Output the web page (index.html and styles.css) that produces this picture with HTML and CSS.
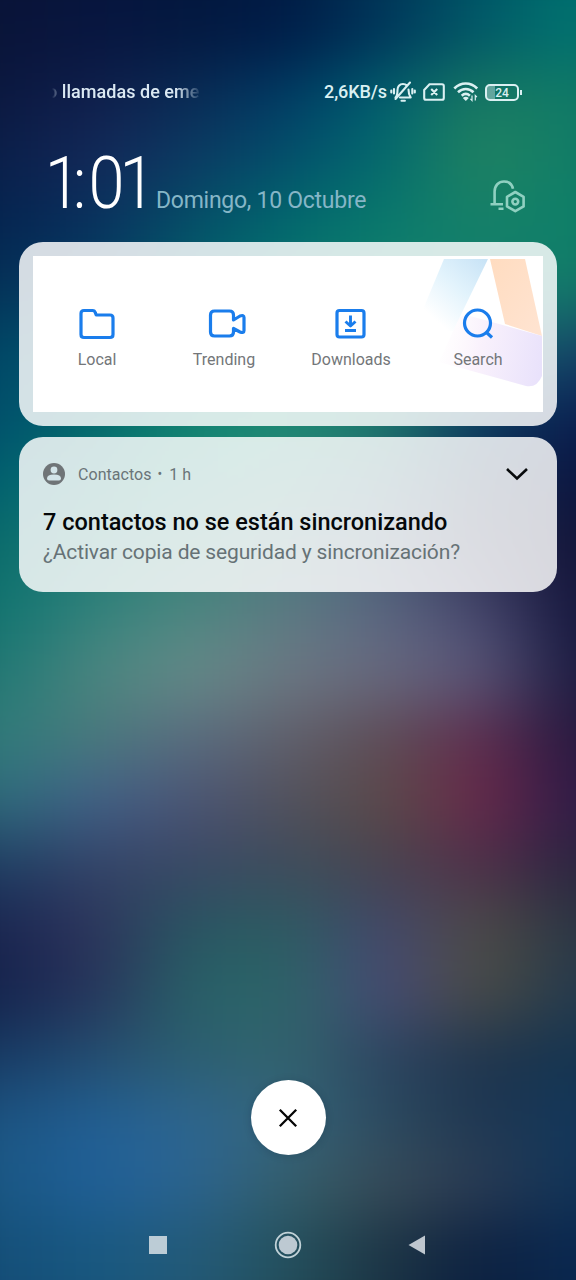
FILE: index.html
```html
<!DOCTYPE html>
<html lang="es">
<head>
<meta charset="utf-8">
<title>Notificaciones</title>
<link rel="stylesheet" href="styles.css">
</head>
<body>
<div class="screen">
  <div class="wallpaper" id="wallpaper"></div>
  <header class="status">
    <div class="carrier"><span>o llamadas de eme</span></div>
    <div class="indicators">
      <span class="speed">2,6KB/s</span>
      <svg class="mute" width="26" height="24" viewBox="0 0 26 24" fill="none" stroke="#daf0f2" stroke-width="2.100" stroke-linecap="round" stroke-linejoin="round"><path d="M5.500 17.500c2-2 2-4 2-7.500C7.500 6.500 9.500 4 13 4c1.800 0 3 .7 3.800 1.700M18.500 9.500c0 4 .7 6 2.200 8H10M20 2.500L5.500 19M11.500 20.800h3.400M4 9v4.500M1.300 10.500v2M22.300 9v4.500M24.800 10.500v2"/></svg>
      <svg class="sim" width="22" height="18" viewBox="0 0 22 18" fill="none" stroke="#daf0f2" stroke-width="2.100"><path d="M6.500 1.200H19c1.200 0 1.800.6 1.800 1.800v12c0 1.200-.6 1.800-1.800 1.800H3c-1.200 0-1.800-.6-1.800-1.800V7zM8.200 6l6 6M14.200 6l-6 6"/></svg>
      <svg class="wifi" width="26" height="20" viewBox="0 0 26 20" fill="none" stroke="#daf0f2" stroke-width="2.600"><path d="M1.300 6.500C8-.2 17.500-.2 24.200 6.500M5 10.200c4.500-4.300 11-4.300 15.500 0M8.700 13.700c2.500-2.300 5.700-2.300 8.200 0"/><path d="M12.800 19l-3-3q3-2.300 6 0z" fill="#daf0f2" stroke="none"/><path d="M19 13.500v5l-1.600-1.600M22.300 18.500v-5l1.600 1.600" stroke-width="1.200"/></svg>
      <span class="battery"><span class="cell">24</span><i></i></span>
    </div>
  </header>
  <section class="clock">
    <svg class="time" width="104" height="66" viewBox="0 0 104 66"><text class="digits" transform="scale(.9 1)" x="-8 23 40.500 75" y="59.500">1:01</text></svg>
    <span class="date">Domingo, 10 Octubre</span>
    <svg class="bell" width="36" height="34" viewBox="0 0 36 34" fill="none" stroke="#90d0c1" stroke-width="2.600" stroke-linejoin="round"><path d="M.5 25.300h12.500M8.500 29.800h5M4.600 25V12.500C4.600 6.500 8.700 2.500 14 2.500c4.500 0 8 2.600 9 7.300"/><path d="M25.300 13l8.300 4.800v9.600l-8.300 4.800-8.300-4.800v-9.600z"/><circle cx="25.300" cy="22.600" r="2.900"/></svg>
  </section>
  <main class="notifications">
    <article class="card shortcuts">
      <div class="panel">
        <svg class="art" width="124" height="134" viewBox="0 0 124 134">
          <defs>
            <linearGradient id="sky" gradientUnits="userSpaceOnUse" x1="66" y1="3" x2="14" y2="62"><stop stop-color="#c8e3f6"/><stop offset=".5" stop-color="#e2f3fc"/><stop offset="1" stop-color="#fff"/></linearGradient>
            <linearGradient id="peach" x1="0" y1="0" x2="1" y2="1"><stop stop-color="#ffdcc0"/><stop offset="1" stop-color="#ffe4d2"/></linearGradient>
            <linearGradient id="lilac" gradientUnits="userSpaceOnUse" x1="22" y1="80" x2="124" y2="100"><stop stop-color="#fdf5fb" stop-opacity="0"/><stop offset=".4" stop-color="#f9f1fc"/><stop offset="1" stop-color="#e9e2fb"/></linearGradient>
          </defs>
          <path d="M25 3H69L34 75H-5z" fill="url(#sky)"/>
          <path d="M71 3h35l17 77-37-12z" fill="url(#peach)"/>
          <path d="M40 62q5-4 11-2l72 20v40q-5 12-16 10l-87-24z" fill="url(#lilac)"/>
        </svg>
        <div class="tile"><svg width="38" height="34" viewBox="0 0 38 34"><path d="M6 3.500h8.500q2.200 0 2.800 2.200l.9 2.300H32q3 0 3 3v16.500q0 3-3 3H6q-3 0-3-3v-21q0-3 3-3z"/></svg><span>Local</span></div>
        <div class="tile"><svg class="nudge" width="38" height="34" viewBox="0 0 38 34"><path d="M6.500 4h15q4 0 4 4v5l6.500-4q4-1.500 4 1.500v13q0 3-4 1.500l-6.500-3.500v3.500q0 4-4 4h-15q-4 0-4-4V8q0-4 4-4z"/></svg><span>Trending</span></div>
        <div class="tile"><svg width="38" height="34" viewBox="0 0 38 34"><rect x="5" y="3.500" width="27" height="26.500" rx="2.500"/><path d="M18.500 8.500v10M13.500 14.500l5 4.500 5-4.500M13 23.500h11" stroke-width="2.900"/></svg><span>Downloads</span></div>
        <div class="tile"><svg width="38" height="34" viewBox="0 0 38 34"><circle cx="18.500" cy="16" r="13"/><path d="M27 25l6 5.500"/></svg><span>Search</span></div>
      </div>
    </article>
    <article class="card contacts">
      <div class="source">
        <svg width="22" height="22" viewBox="0 0 22 22"><circle cx="11" cy="11" r="11" fill="#6f7477"/><circle cx="11" cy="7" r="3.400" fill="#d3e4e9"/><path d="M4 15.500q0-4 7-4t7 4q0 2-2 2H6q-2 0-2-2z" fill="#d3e4e9"/></svg>
        <span class="app">Contactos</span><span class="dot">•</span><span class="age">1 h</span>
        <svg class="expand" width="24" height="16" viewBox="0 0 24 16" fill="none" stroke="#080a0c" stroke-width="2.600"><path d="M2 3l10 9.500L22 3"/></svg>
      </div>
      <h1 class="title">7 contactos no se están sincronizando</h1>
      <p class="message">¿Activar copia de seguridad y sincronización?</p>
    </article>
  </main>
  <div class="spacer"></div>
  <button class="clear" aria-label="Borrar"><svg width="20" height="20" viewBox="0 0 20 20" fill="none" stroke="#050505" stroke-width="2.300"><path d="M1.800 1.800l16.400 16.400M18.200 1.800L1.800 18.200"/></svg></button>
  <nav class="navigation">
    <svg width="18" height="18"><rect width="18" height="18" fill="#bcccd6"/></svg>
    <svg width="28" height="28" viewBox="0 0 28 28"><circle cx="14" cy="14" r="12.300" fill="none" stroke="#c1d2d8" stroke-width="1.800"/><circle cx="14" cy="14" r="9.300" fill="#bdc9d2"/></svg>
    <svg width="18" height="20" viewBox="0 0 18 20"><path d="M17 .5v19L.5 10z" fill="#bfc7cf"/></svg>
  </nav>
</div>
<script src="wallpaper.js"></script>
</body>
</html>
```
FILE: styles.css
```css
* { box-sizing: border-box; }
body { margin: 0; font-family: Roboto, "Noto Sans", sans-serif; background: #0a1238; }
.screen { position: relative; width: 576px; height: 1280px; overflow: hidden; display: flex; flex-direction: column; isolation: isolate; }
.wallpaper { position: absolute; z-index: -1; inset: -64px; display: flex; flex-direction: column; filter: blur(32px); }
.wallpaper div { flex: 0 0 64px; }
.status { height: 112px; padding: 80px 54px 0 50px; display: flex; justify-content: space-between; align-items: flex-start; color: #dbe9f3; }
.carrier { width: 156px; height: 26px; white-space: nowrap; font-size: 18px; font-weight: 500; line-height: 24px; -webkit-mask-image: linear-gradient(90deg, transparent 2px, #000 14px, #000 126px, transparent 152px); mask-image: linear-gradient(90deg, transparent 2px, #000 14px, #000 126px, transparent 152px); }
.carrier span { margin-left: -3px; letter-spacing: .04px; }
.indicators { display: flex; align-items: center; height: 24px; color: #daf0f2; }
.speed { font-size: 18px; font-weight: 500; line-height: 24px; width: 66px; letter-spacing: -.1px; white-space: nowrap; }
.mute { margin-right: 7px; }
.sim { margin-right: 8px; }
.wifi { margin-right: 6px; }
.battery { display: flex; align-items: center; }
.cell { width: 34px; height: 17px; border: 2px solid #daf0f2; border-radius: 5px; font-size: 12px; font-weight: 500; line-height: 14px; text-align: center; background: linear-gradient(90deg, rgba(218,240,242,.4) 8px, transparent 8px); }
.battery i { width: 2px; height: 5px; margin-left: 1px; background: #daf0f2; }
.clock { height: 130px; padding: 36px 50px 0 52px; display: flex; align-items: flex-start; }
.time { overflow: visible; }
.digits { font-family: Roboto, sans-serif; font-weight: 300; font-size: 72px; fill: #fff; }
.date { margin-top: 39px; font-size: 23px; letter-spacing: -.27px; line-height: 27px; color: #86b6c7; white-space: nowrap; }
.bell { margin: 31px 0 0 auto; }
.notifications { padding: 0 19px; display: grid; gap: 11px; }
.card { border-radius: 24px; background: rgba(255,255,255,.83); }
.shortcuts { height: 184px; padding: 14px; }
.panel { position: relative; height: 156px; padding-top: 51px; background: #fff; display: grid; grid-template-columns: repeat(4, 127px); }
.art { position: absolute; right: 0; top: 0; width: 124px; }
.tile { position: relative; display: flex; flex-direction: column; align-items: center; padding-left: 1px; font-size: 16px; line-height: 20px; color: #737679; }
.tile svg { fill: none; stroke: #1a7dec; stroke-width: 3.200; stroke-linejoin: round; }
.tile .nudge { margin-left: 5px; }
.tile span { margin-top: 9px; }
.contacts { height: 155px; padding: 26px 28px 0 24px; }
.source { display: flex; align-items: center; height: 22px; font-size: 16px; color: #6a7478; }
.app { margin-left: 13px; letter-spacing: .05px; }
.dot { margin: 0 7px 0 6px; font-size: 14px; }
.expand { margin-left: auto; }
.title { margin: 23px 0 0; font-size: 23.500px; line-height: 29px; font-weight: 500; color: #05080a; white-space: nowrap; }
.message { margin: 1px 0 0; font-size: 21px; letter-spacing: -.15px; line-height: 28px; color: #667276; white-space: nowrap; }
.spacer { flex: 1; }
.clear { align-self: center; width: 75px; height: 75px; padding: 0; border: 0; border-radius: 50%; background: #fff; display: grid; place-items: center; box-shadow: 0 1px 8px rgba(0,20,40,.16); }
.navigation { height: 125px; padding: 55px 150px 0 149px; display: flex; align-items: center; justify-content: space-between; }
```
FILE: wallpaper.js
```js
// Colour rows, 64px apart, sampled every 96px across the screen.
const rows = [
  "0a1438 07153f 03183f 001c46 00385a 005868 007470",
  "0a1438 07153f 03183f 001a46 00345a 005868 007270",
  "0b1840 101f4c 0a2b55 003c66 006070 1a7a62 107a66",
  "0a1f4a 15295a 0b3b64 04506c 036a6e 228460 107c68",
  "042450 08315e 045068 006a6e 0a7a6c 15806a 0d8068",
  "053158 053f64 04606c 0a7470 12806c 15806a 147a6a",
  "004868 00586c 0a706e 108070 188070 18686c 16426a",
  "004e6c 04686c 108470 1c8c74 187868 083a64 0a1e50",
  "006070 0a7870 1c8878 308478 306878 183050 0a1440",
  "0a6c6c 1e7c74 388478 4c7c80 486078 2a3050 121338",
  "107470 32827c 4b8580 5b7a82 5a6580 46456c 14153c",
  "207874 4c8680 668c88 6c7884 686a80 5a587a 1a1a40",
  "307c7a 4a7a7c 5a6c80 60606c 5d4c56 602c4e 26183f",
  "2e6c7c 42608a 4b5474 52525c 5c4a48 6c284a 2e1a48",
  "1f3e64 344468 3a4764 3e4c5c 48444e 502e4a 2a2440",
  "1a2550 2e345c 285662 2c5c62 42466c 4e4c46 2a3644",
  "14224c 28345c 286268 2c6468 484a76 4c4c44 243a4e",
  "173a64 244e70 2c5e70 33646e 2c4460 1f344c 143450",
  "1c5482 215f94 2e6690 35647a 2b4a60 1f3650 12375c",
  "1a5884 20609a 2b6490 36606c 3a4c58 2c3c54 103458",
  "144e78 185880 235a78 24505c 1c3444 0c2040 0a2850",
  "144e78 185880 235a78 24505c 1c3444 0c2040 0a2850"
];
const wallpaper = document.getElementById("wallpaper");
rows.forEach(row => {
  const strip = document.createElement("div");
  const stops = row.split(" ").map((c, i) => `#${c} ${64 + i * 96}px`);
  strip.style.background = `linear-gradient(90deg, ${stops.join(",")})`;
  wallpaper.append(strip);
});
```
